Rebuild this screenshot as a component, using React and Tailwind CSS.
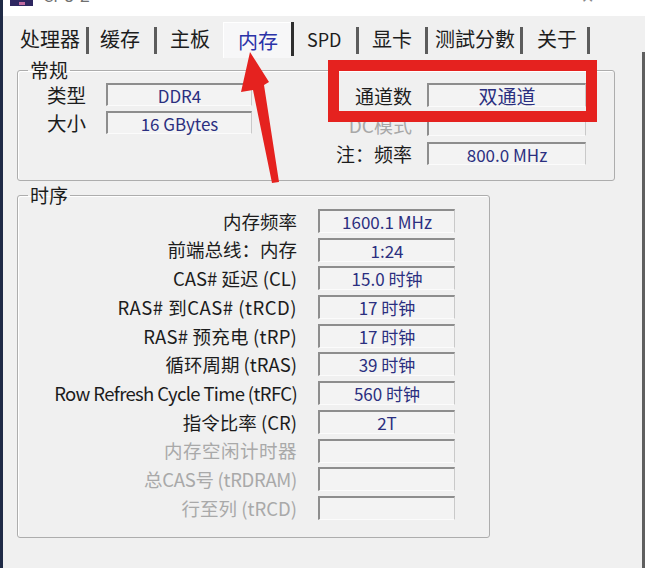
import React from "react";

const FONT = "font-['Noto_Sans_CJK_SC','Noto_Sans',sans-serif]";

function Field({ className = "", children }) {
  return (
    <div
      className={
        "flex items-center justify-center border-t-2 border-l-2 border-r border-b border-t-[#8d8d8d] border-l-[#8d8d8d] border-r-[#c9c9c9] border-b-[#fbfbfb] bg-[#f3f3f3] text-[17px] leading-none text-[#2b2f80] " +
        className
      }
    >
      {children}
    </div>
  );
}

const timing = [
  ["内存频率", "1600.1 MHz", false, ""],
  ["前端总线：内存", "1:24", false, ""],
  ["CAS# 延迟 (CL)", "15.0 时钟", false, ""],
  ["RAS# 到CAS# (tRCD)", "17 时钟", false, "tracking-[0.5px]"],
  ["RAS# 预充电 (tRP)", "17 时钟", false, "tracking-[0.2px]"],
  ["循环周期 (tRAS)", "39 时钟", false, ""],
  ["Row Refresh Cycle Time (tRFC)", "560 时钟", false, "tracking-[-0.65px]"],
  ["指令比率 (CR)", "2T", false, ""],
  ["内存空闲计时器", "", true, "tracking-[0.5px]"],
  ["总CAS号 (tRDRAM)", "", true, "tracking-[-0.3px]"],
  ["行至列 (tRCD)", "", true, ""],
];

function Bar({ dark }) {
  return dark ? (
    <div className="w-[3px] h-[34px] mt-[6px] bg-[#2e2e2e]" />
  ) : (
    <div className="w-[3px] h-[27px] mt-[11px] bg-[#5c5c5c]" />
  );
}

function Tab({ className, children }) {
  return (
    <div className={"h-[42px] pt-[4px] flex items-center text-[20px] leading-none text-[#1d1d1d] " + className}>
      {children}
    </div>
  );
}

export default function App() {
  return (
    <div className={"relative w-[650px] h-[568px] overflow-hidden flex bg-[#f0f0f0] " + FONT}>
      {/* left window edge */}
      <div className="w-[3px] h-full bg-[#1f2a46]" />

      {/* main column */}
      <div className="w-[639px] h-full flex flex-col">
        {/* title bar (cut off at top) */}
        <div className="h-[16px] bg-white overflow-hidden flex items-start">
          <div className="ml-[7px] -mt-[12px] w-[23px] h-[18px] bg-[#2e2660] flex items-end justify-center">
            <div className="w-[6px] h-[3px] mb-[1px] bg-[#c06aa0]" />
          </div>
          <span className="ml-[10px] -mt-[13px] text-[16px] leading-none text-[#707070]">CPU-Z</span>
          <span className="ml-[423px] -mt-[12px] text-[14px] leading-none text-[#9a9a9a]">—</span>
          <span className="ml-[56px] -mt-[12px] text-[16px] leading-none text-[#8a8a8a]">✕</span>
        </div>

        {/* tabs */}
        <div className="h-[42px] flex items-start">
          <Tab className="w-[83px] pl-[17px]">处理器</Tab>
          <Bar />
          <Tab className="w-[65px] pl-[11px]">缓存</Tab>
          <Bar />
          <Tab className="w-[66px] pl-[13px]">主板</Tab>
          <div className="w-[68px] h-[36px] mt-[6px] pl-[14px] pt-[1px] flex items-center bg-[#f7f7f8] border-t border-l border-t-[#ffffff] border-l-[#ffffff] text-[20px] leading-none text-[#2b33a8]">
            内存
          </div>
          <Bar dark />
          <Tab className="w-[62px] pl-[13px]">
            <span className="text-[18px]">SPD</span>
          </Tab>
          <Bar />
          <Tab className="w-[66px] pl-[13px]">显卡</Tab>
          <Bar />
          <Tab className="w-[92px] pl-[7px]">测試分數</Tab>
          <Bar />
          <Tab className="w-[64px] pl-[14px]">关于</Tab>
          <Bar />
        </div>

        {/* panel */}
        <div className="flex-1 flex flex-col pl-[14px] text-[#1c1c1c]">
          {/* 常规 */}
          <fieldset className="mt-[2px] w-[598px] h-[121px] border border-[#adadad] rounded-[3px] shadow-[inset_1px_1px_0_#ffffff]">
            <legend className="ml-[10px] px-[2px] text-[19px] leading-[20px]">常规</legend>
            <div className="flex pt-[3px]">
              <div className="flex flex-col gap-[5px] pl-[29px]">
                <div className="flex items-center">
                  <span className="w-[41px] text-[19.5px] leading-none">类型</span>
                  <Field className="ml-[18px] w-[146px] h-[23px]">DDR4</Field>
                </div>
                <div className="flex items-center">
                  <span className="w-[41px] text-[19.5px] leading-none">大小</span>
                  <Field className="ml-[18px] w-[146px] h-[23px]">16 GBytes</Field>
                </div>
              </div>
              <div className="flex flex-col gap-[6px] ml-[78px]">
                <div className="flex items-center">
                  <span className="w-[82px] text-right text-[19px] leading-none">通道数</span>
                  <Field className="ml-[15px] w-[159px] h-[24px] text-[19px]">双通道</Field>
                </div>
                <div className="flex items-center">
                  <span className="w-[82px] text-right text-[19px] leading-none text-[#a8a8a8]">DC模式</span>
                  <Field className="ml-[15px] w-[159px] h-[23px]" />
                </div>
                <div className="flex items-center">
                  <span className="w-[82px] text-right text-[19px] leading-none">注：频率</span>
                  <Field className="ml-[15px] w-[159px] h-[23px]">800.0 MHz</Field>
                </div>
              </div>
            </div>
          </fieldset>

          {/* 时序 */}
          <fieldset className="mt-[4px] w-[473px] h-[353px] border border-[#adadad] rounded-[3px] shadow-[inset_1px_1px_0_#ffffff]">
            <legend className="ml-[10px] px-[2px] text-[19px] leading-[20px]">时序</legend>
            <div className="flex flex-col gap-[4.7px] pt-[4px]">
              {timing.map(([label, value, disabled, extra]) => (
                <div key={label} className="flex items-center h-[24px]">
                  <span
                    className={
                      "w-[279px] text-right text-[18.5px] leading-none whitespace-nowrap " +
                      (disabled ? "text-[#a9a9a9] " : "text-[#1c1c1c] ") +
                      extra
                    }
                  >
                    {label}
                  </span>
                  <Field className="ml-[21px] w-[137px] h-[24px]">{value}</Field>
                </div>
              ))}
            </div>
          </fieldset>
        </div>
      </div>

      {/* right window edge */}
      <div className="w-[3px] h-full flex flex-col">
        <div className="h-[16px] bg-white" />
        <div className="h-[36px] bg-[#f0f0f0]" />
        <div className="flex-1 bg-[#5f5f5f]" />
      </div>
      <div className="w-[5px] h-full bg-white" />

      {/* red annotation box */}
      <div className="absolute left-[328px] top-[60px] w-[269px] h-[62px] border-[11px] border-[#e5221f]" />

      {/* red annotation arrow */}
      <svg className="absolute left-0 top-0" width="650" height="568" viewBox="0 0 650 568">
        <polygon
          points="250,52 269,82 264,85 279,182 272,183 253,90 241,92"
          fill="#e5221f"
        />
      </svg>
    </div>
  );
}
